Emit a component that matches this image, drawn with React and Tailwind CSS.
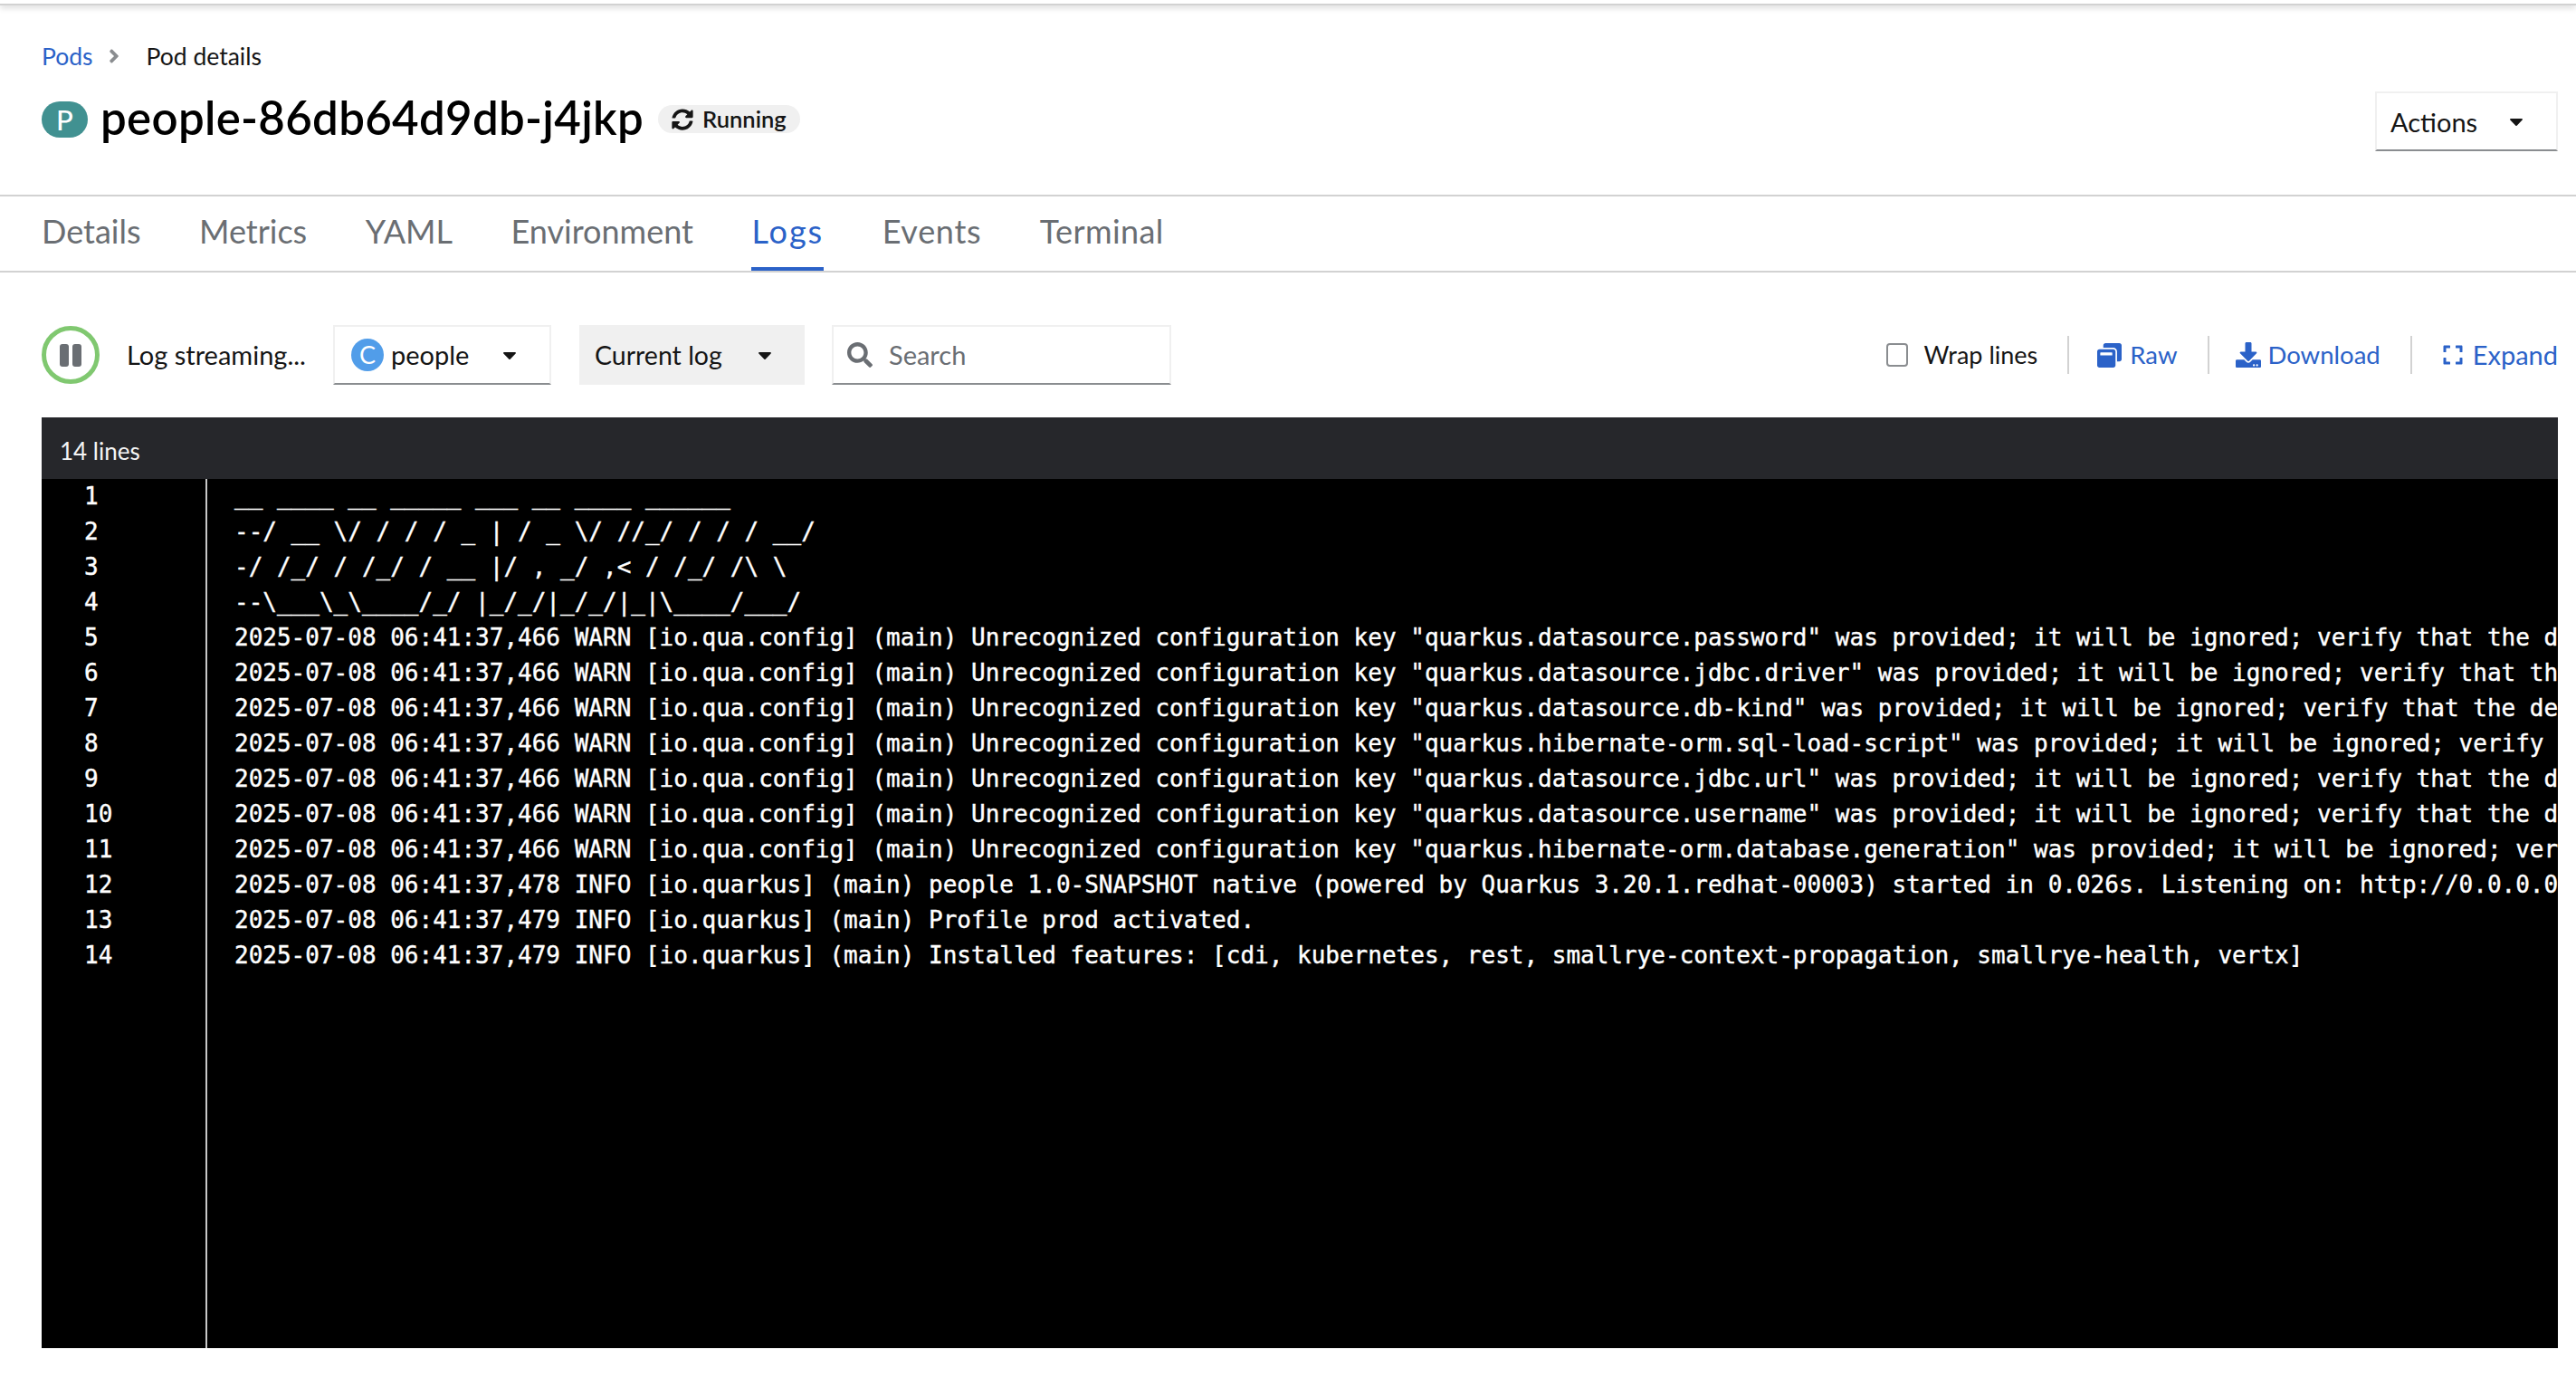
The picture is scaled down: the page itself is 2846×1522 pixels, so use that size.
import React from "react";
import { FaSyncAlt, FaSearch, FaWindowRestore, FaDownload, FaExpand, FaCaretDown, FaAngleRight } from "react-icons/fa";

const warn = "2025-07-08 06:41:37,466 WARN [io.qua.config] (main) Unrecognized configuration key ";
const tail = " was provided; it will be ignored; verify that the dependency extension for this configuration is set or that you did not make a typo";
const lines = [
  "__ ____ __ _____ ___ __ ____ ______",
  "--/ __ \\/ / / / _ | / _ \\/ //_/ / / / __/",
  "-/ /_/ / /_/ / __ |/ , _/ ,< / /_/ /\\ \\",
  "--\\___\\_\\____/_/ |_/_/|_/_/|_|\\____/___/",
  warn + '"quarkus.datasource.password"' + tail,
  warn + '"quarkus.datasource.jdbc.driver"' + tail,
  warn + '"quarkus.datasource.db-kind"' + tail,
  warn + '"quarkus.hibernate-orm.sql-load-script"' + tail,
  warn + '"quarkus.datasource.jdbc.url"' + tail,
  warn + '"quarkus.datasource.username"' + tail,
  warn + '"quarkus.hibernate-orm.database.generation"' + tail,
  "2025-07-08 06:41:37,478 INFO [io.quarkus] (main) people 1.0-SNAPSHOT native (powered by Quarkus 3.20.1.redhat-00003) started in 0.026s. Listening on: http://0.0.0.0:8080",
  "2025-07-08 06:41:37,479 INFO [io.quarkus] (main) Profile prod activated.",
  "2025-07-08 06:41:37,479 INFO [io.quarkus] (main) Installed features: [cdi, kubernetes, rest, smallrye-context-propagation, smallrye-health, vertx]",
];

const tabs = [
  { label: "Details", cls: "" },
  { label: "Metrics", cls: "" },
  { label: "YAML", cls: "" },
  { label: "Environment", cls: "" },
  { label: "Logs", cls: "text-[#2b62c8] border-b-4 border-[#2b62c8] h-[82px] tracking-[2px]" },
  { label: "Events", cls: "tracking-[0.7px]" },
  { label: "Terminal", cls: "tracking-[0.4px]" },
];

function Sep() {
  return <div className="w-[2px] h-[42px] bg-[#d2d2d2]" />;
}

export default function App() {
  return (
    <div className="min-h-screen bg-white text-[#151515] font-['Lato','Open_Sans',sans-serif] text-[29px]">
      <div className="h-[6px] border-b-2 border-[#d2d2d2] shadow-[0_3px_6px_rgba(0,0,0,0.14)]" />
      <header className="h-[211px] border-b-2 border-[#d2d2d2] pl-[46px] pr-[20px] flex justify-between">
        <div>
          <nav className="mt-[38px] flex items-center text-[26.5px] leading-[36px]">
            <span className="text-[#2b62c8]">Pods</span>
            <FaAngleRight className="ml-[11px] mr-[24px] text-[#8a8d90] text-[24px]" />
            <span>Pod details</span>
          </nav>
          <div className="mt-[22px] flex items-center">
            <span className="w-[51px] h-[40px] rounded-full bg-[#419191] text-white text-[31px] font-medium flex items-center justify-center">P</span>
            <h1 className="ml-[14px] mb-[4px] text-[51px] leading-[56px] tracking-[0.3px] font-semibold text-black">people-86db64d9db-j4jkp</h1>
            <span className="ml-[16px] mb-[1px] h-[31px] w-[157px] rounded-full bg-[#f0f0f0] flex items-center pl-[15px] text-[25.5px] font-semibold">
              <FaSyncAlt className="text-[24px] mr-[10px]" />
              Running
            </span>
          </div>
        </div>
        <button className="mt-[95px] w-[202px] h-[66px] border-2 border-[#f0f0f0] border-b-[#8a8d90] flex items-center justify-between pl-[15px] pr-[32px] leading-none">
          Actions
          <FaCaretDown className="text-[24px]" />
        </button>
      </header>

      <nav className="h-[84px] border-b-2 border-[#d2d2d2] pl-[46px] flex gap-[64.5px] text-[36px] text-[#6a6e73]">
        {tabs.map((t) => (
          <div key={t.label} className={"pt-[11px] " + t.cls}>
            {t.label}
          </div>
        ))}
      </nav>

      <div className="pl-[46px] pr-[20px] pt-[58px] h-[160px]">
        <div className="flex items-center h-[66px]">
          <div className="w-[64px] h-[64px] rounded-full border-[5px] border-[#80c870] flex items-center justify-center gap-[4px]">
            <span className="w-[10px] h-[25px] rounded-[3px] bg-[#6a6e73]" />
            <span className="w-[10px] h-[25px] rounded-[3px] bg-[#6a6e73]" />
          </div>
          <span className="ml-[30px] w-[228px]">Log streaming...</span>
          <button className="w-[241px] h-[66px] border-2 border-[#f0f0f0] border-b-[#8a8d90] flex items-center pl-[18px]">
            <span className="w-[36px] h-[36px] rounded-full bg-[#519de9] text-white flex items-center justify-center text-[27px]">C</span>
            <span className="ml-[8px]">people</span>
            <FaCaretDown className="ml-[33px] text-[24px]" />
          </button>
          <button className="ml-[31px] w-[249px] h-[66px] bg-[#f0f0f0] flex items-center pl-[17px] text-[28.5px]">
            Current log
            <FaCaretDown className="ml-[35px] text-[24px]" />
          </button>
          <div className="ml-[30px] w-[375px] h-[66px] border-2 border-[#f0f0f0] border-b-[#8a8d90] flex items-center pl-[15px] text-[#6a6e73]">
            <FaSearch className="text-[28px]" />
            <span className="ml-[18px]">Search</span>
          </div>
          <div className="ml-auto flex items-center text-[27.5px]">
            <span className="w-[24px] h-[26px] rounded-[4px] border-2 border-[#8a8d90]" />
            <span className="ml-[18px] text-[27px]">Wrap lines</span>
            <div className="ml-[33px]"><Sep /></div>
            <span className="ml-[31px] flex items-center text-[#2b62c8]"><FaWindowRestore className="text-[27px] mr-[9px]" />Raw</span>
            <div className="ml-[33px]"><Sep /></div>
            <span className="ml-[29px] flex items-center text-[#2b62c8]"><FaDownload className="text-[28px] mr-[8px]" />Download</span>
            <div className="ml-[33px]"><Sep /></div>
            <span className="ml-[33px] flex items-center text-[#2b62c8] text-[29px]"><FaExpand className="text-[24px] mr-[10px]" />Expand</span>
          </div>
        </div>
      </div>

      <section className="ml-[46px] mr-[20px] h-[1028px] bg-black flex flex-col overflow-hidden">
        <div className="h-[68px] shrink-0 bg-[#26272b] text-[#f5f5f5] flex items-center pl-[20px] pt-[6px] text-[26px]">14 lines</div>
        <div className="flex-1 flex font-['DejaVu_Sans_Mono',monospace] text-[26px] leading-[39px] text-white [-webkit-text-stroke:0.4px_white]">
          <div className="w-[183px] shrink-0 border-r-2 border-[#c8c8c8] pl-[47px]">
            {lines.map((_, i) => <div key={i}>{i + 1}</div>)}
          </div>
          <div className="pl-[30px] whitespace-nowrap">
            {lines.map((l, i) => <div key={i}>{l}</div>)}
          </div>
        </div>
      </section>
    </div>
  );
}
